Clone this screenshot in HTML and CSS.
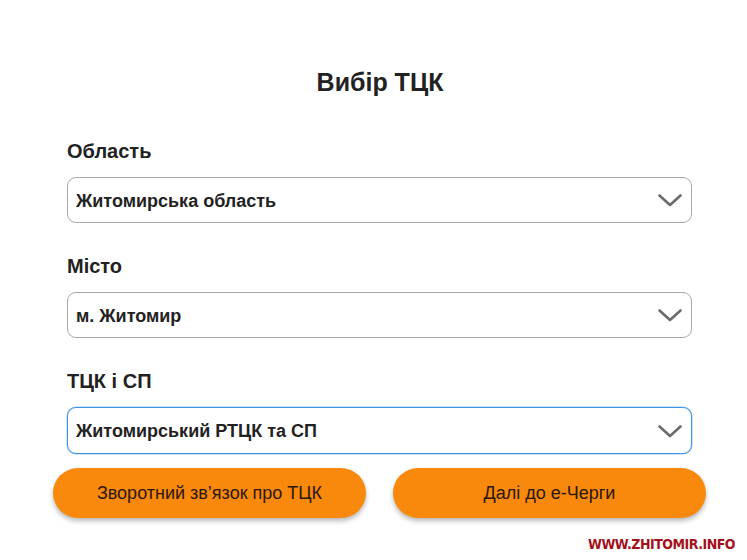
FILE: index.html
```html
<!DOCTYPE html>
<html lang="uk">
<head>
<meta charset="utf-8">
<title>Вибір ТЦК</title>
<link rel="stylesheet" href="styles.css">
</head>
<body>
<div class="page">
  <h1 class="title">Вибір ТЦК</h1>
  <div class="form">
    <div class="field">
      <div class="label">Область</div>
      <div class="select">
        <span class="value">Житомирська область</span>
        <svg class="chev" width="24" height="13" viewBox="0 0 24 13"><path d="M1.5 1.5 L12 11 L22.5 1.5" fill="none" stroke="#6b6b6b" stroke-width="2.6" stroke-linecap="round" stroke-linejoin="round"/></svg>
      </div>
    </div>
    <div class="field">
      <div class="label">Місто</div>
      <div class="select">
        <span class="value">м. Житомир</span>
        <svg class="chev" width="24" height="13" viewBox="0 0 24 13"><path d="M1.5 1.5 L12 11 L22.5 1.5" fill="none" stroke="#6b6b6b" stroke-width="2.6" stroke-linecap="round" stroke-linejoin="round"/></svg>
      </div>
    </div>
    <div class="field">
      <div class="label">ТЦК і СП</div>
      <div class="select focused">
        <span class="value">Житомирський РТЦК та СП</span>
        <svg class="chev" width="24" height="13" viewBox="0 0 24 13"><path d="M1.5 1.5 L12 11 L22.5 1.5" fill="none" stroke="#6b6b6b" stroke-width="2.6" stroke-linecap="round" stroke-linejoin="round"/></svg>
      </div>
    </div>
  </div>
  <div class="buttons">
    <div class="btn">Зворотний зв’язок про ТЦК</div>
    <div class="btn">Далі до е-Черги</div>
  </div>
</div>
<div class="watermark">WWW.ZHITOMIR.INFO</div>
</body>
</html>
```

FILE: styles.css
```css
html, body {
  margin: 0;
  padding: 0;
  background: #ffffff;
}
body {
  font-family: "Liberation Sans", Arial, sans-serif;
  color: #222222;
  width: 747px;
  height: 560px;
  overflow: hidden;
}
.page {
  width: 653px;
  margin-left: 53px;
  padding-top: 67px;
  display: flex;
  flex-direction: column;
}
.title {
  margin: 0;
  font-size: 25px;
  line-height: 30px;
  font-weight: bold;
  text-align: center;
  color: #222222;
  padding-left: 1px;
}
.form {
  margin-top: 42px;
  padding: 0 14px;
  display: flex;
  flex-direction: column;
  gap: 31px;
}
.field {
  display: flex;
  flex-direction: column;
}
.label {
  font-size: 20px;
  line-height: 24px;
  font-weight: bold;
  color: #222222;
  margin-bottom: 14px;
}
.select {
  height: 46px;
  box-sizing: border-box;
  border: 1px solid #a9a9a9;
  border-radius: 9px;
  display: flex;
  align-items: center;
  justify-content: space-between;
  padding: 0 9px 0 8px;
  background: #fff;
}
.select.focused {
  border-color: #3f95e4;
  height: 47px;
  box-shadow: 0 0 0 0.5px rgba(63, 149, 228, 0.5);
}
.value {
  font-size: 18px;
  font-weight: bold;
  color: #222222;
  padding-top: 2px;
}
.chev {
  display: block;
  margin-top: 1px;
}
.buttons {
  margin-top: 14px;
  display: flex;
  gap: 27px;
}
.btn {
  flex: 1;
  height: 50px;
  border-radius: 25px;
  background: #f8890d;
  color: #2a1705;
  font-size: 18px;
  display: flex;
  align-items: center;
  justify-content: center;
  box-shadow: 0 3px 5px rgba(0, 0, 0, 0.28);
}
.watermark {
  margin-top: 17px;
  padding-right: 12px;
  text-align: right;
  font-family: "DejaVu Sans Condensed", "DejaVu Sans", sans-serif;
  font-stretch: condensed;
  font-weight: bold;
  font-size: 14px;
  line-height: 18px;
  color: #a3111b;
  white-space: nowrap;
  letter-spacing: -0.5px;
}
```
